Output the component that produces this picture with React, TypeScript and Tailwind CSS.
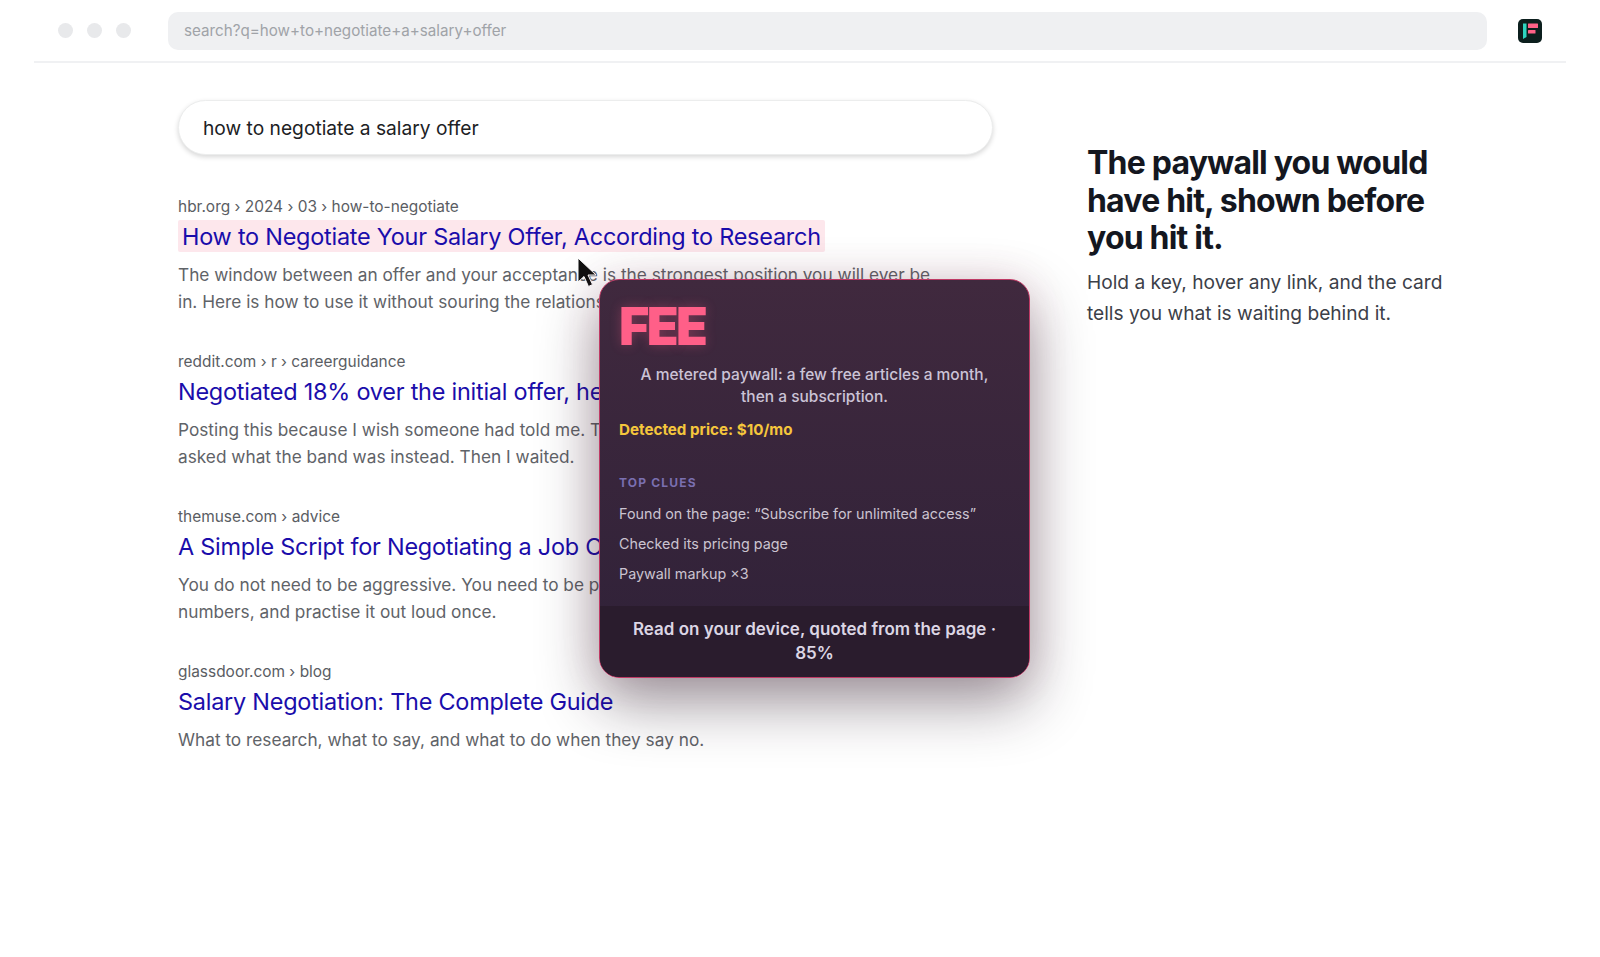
const font = { fontFamily: 'Inter, "Liberation Sans", sans-serif' };

function Result({ crumb, title, snippet, highlight }: { crumb: string; title: string; snippet: string; highlight?: boolean }) {
  return (
    <div className="h-[155px]">
      <div className="text-[15.45px] leading-[20px] text-[#5a5d63]">{crumb}</div>
      <div className="mt-[3px] h-[32px] leading-[33px] text-[23.45px] text-[#1a0dab] whitespace-nowrap tracking-[-0.01em]">
        <span className={highlight ? "inline-block h-[32px] bg-[#fde7ec] px-[4px] rounded-[2px]" : ""}>{title}</span>
      </div>
      <p className="mt-[8.5px] w-[800px] text-[17.25px] leading-[27.5px] text-[#5f6368] whitespace-pre-line">{snippet}</p>
    </div>
  );
}

export default function App() {
  return (
    <div style={font} className="relative w-[1600px] h-[957px] bg-white overflow-hidden">
      <header className="mx-[34px] h-[63px] flex items-center border-b-2 border-[#f0f1f3]">
        <div className="flex gap-[14px] ml-[24px]">
          <span className="w-[15px] h-[15px] rounded-full bg-[#e8e9eb]" />
          <span className="w-[15px] h-[15px] rounded-full bg-[#e8e9eb]" />
          <span className="w-[15px] h-[15px] rounded-full bg-[#e8e9eb]" />
        </div>
        <div className="ml-[37px] w-[1319px] h-[38px] rounded-[10px] bg-[#eff0f2] flex items-center px-[16px] pt-[2px] text-[15.2px] text-[#a0a3a8]">
          search?q=how+to+negotiate+a+salary+offer
        </div>
        <div className="ml-[31px]">
          <svg width="24" height="24" viewBox="0 0 24 24">
            <rect width="24" height="24" rx="5" fill="#0c1f1e" />
            <path d="M5 4.5h3.5v13.5l-3.5 2z" fill="#2dd4bf" />
            <rect x="10" y="4.5" width="10" height="4.5" rx="0.5" fill="#ff6288" />
            <rect x="10" y="11" width="7.5" height="3.6" rx="0.5" fill="#ff6288" />
          </svg>
        </div>
      </header>

      <main className="flex pl-[178px] pt-[37px]">
        <section className="w-[815px]">
          <div className="h-[55px] rounded-full bg-white border border-[#eceded] shadow-[0_2px_5px_rgba(0,0,0,0.16)] flex items-center pl-[24px] pt-[1px] text-[19.2px] text-[#202124]">
            how to negotiate a salary offer
          </div>
          <div className="mt-[42px]">
            <Result
              highlight
              crumb="hbr.org › 2024 › 03 › how-to-negotiate"
              title="How to Negotiate Your Salary Offer, According to Research"
              snippet={"The window between an offer and your acceptance is the strongest position you will ever be\nin. Here is how to use it without souring the relationship."}
            />
            <Result
              crumb="reddit.com › r › careerguidance"
              title="Negotiated 18% over the initial offer, here is exactly how"
              snippet={"Posting this because I wish someone had told me. The recruiter named a figure and I\nasked what the band was instead. Then I waited."}
            />
            <Result
              crumb="themuse.com › advice"
              title="A Simple Script for Negotiating a Job Offer"
              snippet={"You do not need to be aggressive. You need to be prepared, know your market\nnumbers, and practise it out loud once."}
            />
            <Result
              crumb="glassdoor.com › blog"
              title="Salary Negotiation: The Complete Guide"
              snippet="What to research, what to say, and what to do when they say no."
            />
          </div>
        </section>
        <aside className="ml-[94px] w-[370px] pt-[44px]">
          <h2 className="text-[32px] leading-[37.5px] font-bold tracking-[-0.025em] text-[#14171f]">
            The paywall you would have hit, shown before you hit it.
          </h2>
          <p className="mt-[10px] text-[19.15px] leading-[31px] text-[#3c4048]">
            Hold a key, hover any link, and the card tells you what is waiting behind it.
          </p>
        </aside>
      </main>

      <svg className="absolute left-[577px] top-[257px]" width="22" height="34" viewBox="0 0 22 34">
        <path d="M1 1v24l6-5.5 4.5 10 4-2-4.5-9.5h8z" fill="#111" stroke="#fff" strokeWidth="1" />
      </svg>

      <div className="absolute left-[599px] top-[279px] w-[431px] h-[399px] rounded-[20px] border-[1.5px] border-[#bf3a65] bg-gradient-to-b from-[#40293e] to-[#2f2138] shadow-[0_24px_60px_rgba(30,15,30,0.45),0_0_40px_rgba(200,70,110,0.12)] overflow-hidden flex flex-col">
        <div className="flex-1 px-[19px] pt-[17px]">
          <div className="text-[52px] leading-[60px] font-black tracking-[-0.05em] text-[#ff5f88] [text-shadow:0_0_12px_rgba(255,92,135,0.3)]">FEE</div>
          <p className="mt-[6.5px] px-[10px] text-center text-[15.5px] leading-[22.5px] font-medium text-[#cbc3d6]">
            A metered paywall: a few free articles a month, then a subscription.
          </p>
          <div className="mt-[11px] text-[15.2px] leading-[20px] font-bold text-[#f5c63c]">Detected price: $10/mo</div>
          <div className="mt-[35px] text-[12px] leading-[16px] font-bold tracking-[0.1em] text-[#7a6fb0]">TOP CLUES</div>
          <ul className="mt-[13px] flex flex-col gap-[10px] text-[14.35px] leading-[20px] text-[#cbc3d0]">
            <li>Found on the page: “Subscribe for unlimited access”</li>
            <li>Checked its pricing page</li>
            <li>Paywall markup ×3</li>
          </ul>
        </div>
        <div className="h-[71px] bg-[#2a1c2d] flex items-center justify-center text-center px-[24px] text-[17px] leading-[23.5px] font-semibold text-[#dcd6e4]">
          Read on your device, quoted from the page · 85%
        </div>
      </div>
    </div>
  );
}
